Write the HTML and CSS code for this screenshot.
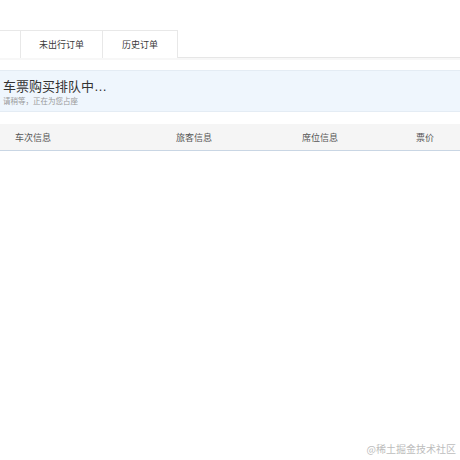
FILE: index.html
```html
<!DOCTYPE html>
<html lang="zh">
<head>
<meta charset="utf-8">
<link rel="stylesheet" href="styles.css">
</head>
<body>
<div class="page">
  <div class="tabs">
    <div class="tab tab-first"></div>
    <div class="tab tab-a">未出行订单</div>
    <div class="tab tab-b">历史订单</div>
  </div>
  <div class="banner">
    <div class="banner-title">车票购买排队中<span class="ellipsis">…</span></div>
    <div class="banner-sub">请稍等，正在为您占座</div>
  </div>
  <div class="thead">
    <div>车次信息</div>
    <div>旅客信息</div>
    <div>席位信息</div>
    <div>票价</div>
  </div>
</div>
<div class="watermark">@稀土掘金技术社区</div>
</body>
</html>
```

FILE: styles.css
```css
html, body {
  margin: 0;
  padding: 0;
  background: #fff;
  font-family: "Noto Sans CJK SC", "Noto Sans", sans-serif;
}
.page {
  padding-top: 30px;
  width: 460px;
}
.tabs {
  display: flex;
  height: 27px;
  border-bottom: 1px solid #e6e6e6;
  box-shadow: 0 2px 0 #f7f7f7;
}
.tab {
  box-sizing: border-box;
  height: 28px;
  border: 1px solid #e8e8e8;
  border-bottom: none;
  margin-left: -1px;
  background: #fff;
  display: flex;
  align-items: center;
  justify-content: center;
  font-size: 9px;
  color: #3a3a3a;
}
.tab-first { width: 21px; border-left: none; margin-left: 0; }
.tab-a { width: 83px; }
.tab-b { width: 76px; }
.banner {
  margin-top: 12px;
  height: 40px;
  box-sizing: content-box;
  background: #eff6fd;
  border-top: 1px solid #e4ecf4;
  border-bottom: 1px solid #e4ecf4;
  padding-left: 3px;
  display: flex;
  flex-direction: column;
  justify-content: center;
}
.banner-title {
  font-size: 13px;
  line-height: 17px;
  color: #333;
}
.ellipsis {
  font-family: "Liberation Sans", sans-serif;
}
.banner-sub {
  font-size: 7.5px;
  line-height: 11px;
  color: #999;
}
.thead {
  margin-top: 12px;
  height: 26px;
  background: #f5f5f5;
  border-bottom: 1px solid #c9d6e4;
  display: grid;
  grid-template-columns: 161px 126px 114px 1fr;
  padding-left: 15px;
  align-items: center;
  font-size: 9px;
  color: #555;
}
.watermark {
  position: absolute;
  right: 4px;
  bottom: 4px;
  font-size: 10px;
  color: #bdbdbd;
}
```
